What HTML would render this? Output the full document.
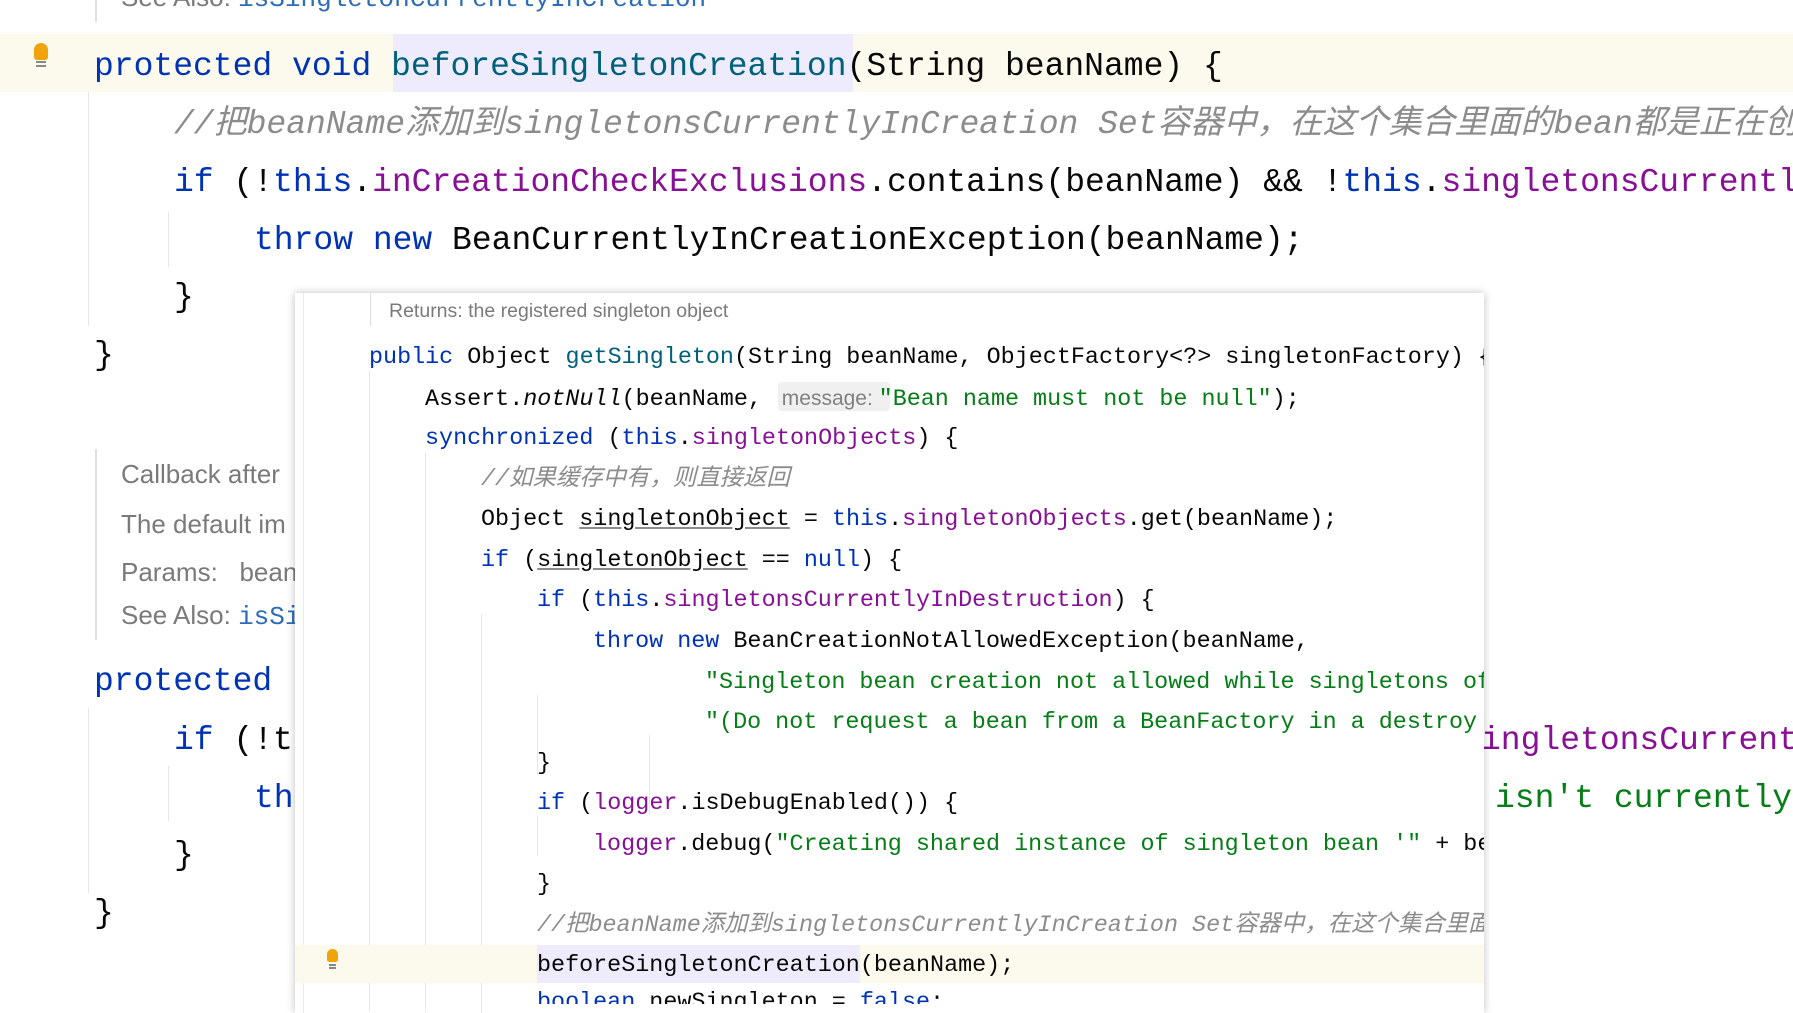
<!DOCTYPE html>
<html><head><meta charset="utf-8"><style>
body{margin:0;width:1793px;height:1004px;overflow:hidden;background:#fff;position:relative;font-family:"Liberation Mono","Noto Sans CJK SC",monospace}
.l{position:absolute;white-space:pre;font-size:33px;line-height:40px;color:#080808}
.p{position:absolute;white-space:pre;font-size:23.4px;line-height:30px;color:#080808}
.k{color:#0033b3}.f{color:#871094}.s{color:#067d17}.m{color:#00627a}
.c{color:#8c8c8c;font-style:italic}
.d{position:absolute;white-space:pre;font-family:"Liberation Sans",sans-serif;font-size:26px;color:#7a7a7a}
.g{position:absolute;width:1px;background:#e6e6e6}
.u{text-decoration:underline;text-decoration-color:#8c8c8c}
.bulb{position:absolute;width:14px;height:17px;background:#f0a30a;border-radius:7px 7px 3px 3px}
</style></head><body>
<div class="d" style="left:121px;top:-18px">See Also: <span style="font-family:'Liberation Mono',monospace;color:#2e6db5">isSingletonCurrentlyInCreation</span></div>
<div class="g" style="left:95px;top:0;height:22px;width:2px;background:#e0e0e0"></div>

<div style="position:absolute;left:0;top:34px;width:1793px;height:58px;background:#fcfaed"></div>
<div style="position:absolute;left:393px;top:34px;width:460px;height:58px;background:#edebfc"></div>
<div class="bulb" style="left:34px;top:43px"></div>
<div style="position:absolute;left:36px;top:61px;width:10px;height:2px;background:#888;box-shadow:0 4px 0 #888"></div>

<div class="g" style="left:88px;top:92px;height:234px"></div>
<div class="g" style="left:168px;top:212px;height:55px"></div>
<div class="g" style="left:88px;top:708px;height:185px"></div>
<div class="g" style="left:168px;top:766px;height:55px"></div>

<div class="l" style="left:94px;top:47px"><span class="k">protected void </span><span class="m">beforeSingletonCreation</span>(String beanName) {</div>
<div class="l c" style="left:174px;top:105px">//把beanName添加到singletonsCurrentlyInCreation Set容器中，在这个集合里面的bean都是正在创建的</div>
<div class="l" style="left:174px;top:163px"><span class="k">if </span>(!<span class="k">this</span>.<span class="f">inCreationCheckExclusions</span>.contains(beanName) &amp;&amp; !<span class="k">this</span>.<span class="f">singletonsCurrentlyInCreation</span>.add(beanName)) {</div>
<div class="l" style="left:254px;top:221px"><span class="k">throw new </span>BeanCurrentlyInCreationException(beanName);</div>
<div class="l" style="left:174px;top:278px">}</div>
<div class="l" style="left:94px;top:336px">}</div>

<div class="g" style="left:95px;top:449px;height:191px;width:2px;background:#e0e0e0"></div>
<div class="d" style="left:121px;top:459px">Callback after</div>
<div class="d" style="left:121px;top:509px">The default im</div>
<div class="d" style="left:121px;top:557px">Params:&nbsp;&nbsp;&nbsp;bean</div>
<div class="d" style="left:121px;top:600px">See Also: <span style="font-family:'Liberation Mono',monospace;color:#2e6db5">isSi</span></div>

<div class="l" style="left:94px;top:662px"><span class="k">protected </span></div>
<div class="l" style="left:174px;top:721px"><span class="k">if </span>(!t</div>
<div class="l" style="left:254px;top:779px"><span class="k">th</span></div>
<div class="l" style="left:174px;top:836px">}</div>
<div class="l" style="left:94px;top:894px">}</div>
<div class="l f" style="left:1481px;top:721px">ingletonsCurrent</div>
<div class="l s" style="left:1495px;top:779px">isn't currently</div>

<div style="position:absolute;left:295px;top:293px;width:1189px;height:720px;background:#fff;box-shadow:0 0 8px rgba(0,0,0,.25);overflow:hidden">
  <div style="position:absolute;left:75px;top:0;width:1px;height:33px;background:#ddd"></div>
  <div style="position:absolute;left:94px;top:7px;font-family:'Liberation Sans',sans-serif;font-size:19.5px;color:#7a7a7a;white-space:pre">Returns: the registered singleton object</div>
  <div style="position:absolute;left:8px;top:0;width:1px;height:720px;background:#ececec"></div>
  <div class="g" style="left:74px;top:78px;height:640px"></div>
  <div class="g" style="left:130px;top:159px;height:560px"></div>
  <div class="g" style="left:186px;top:321px;height:400px"></div>
  <div class="g" style="left:242px;top:402px;height:80px"></div>
  <div class="g" style="left:242px;top:523px;height:40px"></div>
  <div class="g" style="left:354px;top:442px;height:80px"></div>
  <div style="position:absolute;left:0;top:652px;width:1189px;height:38px;background:#fcfaed"></div>
  <div style="position:absolute;left:242px;top:652px;width:323px;height:38px;background:#edebfc"></div>
  <div class="bulb" style="left:32px;top:656px;width:11px;height:13px"></div>
  <div style="position:absolute;left:34px;top:671px;width:7px;height:2px;background:#888;box-shadow:0 3px 0 #888"></div>
  <div style="position:absolute;left:483px;top:89px;width:112px;height:29px;background:#f0f0f0;border-radius:4px"></div>
</div>
<div style="position:absolute;left:295px;top:293px;width:1189px;height:711px;overflow:hidden">
<div class="p" style="left:74px;top:50px"><span class="k">public </span>Object <span class="m">getSingleton</span>(String beanName, ObjectFactory&lt;?&gt; singletonFactory) {</div>
<div class="p" style="left:130px;top:91px">Assert.<i>notNull</i>(beanName, <span style="font-family:'Liberation Sans',sans-serif;color:#808080;font-size:21px"> message: </span><span class="s">"Bean name must not be null"</span>);</div>
<div class="p" style="left:130px;top:131px"><span class="k">synchronized </span>(<span class="k">this</span>.<span class="f">singletonObjects</span>) {</div>
<div class="p c" style="left:186px;top:172px">//如果缓存中有，则直接返回</div>
<div class="p" style="left:186px;top:212px">Object <span class="u">singletonObject</span> = <span class="k">this</span>.<span class="f">singletonObjects</span>.get(beanName);</div>
<div class="p" style="left:186px;top:253px"><span class="k">if </span>(<span class="u">singletonObject</span> == <span class="k">null</span>) {</div>
<div class="p" style="left:242px;top:293px"><span class="k">if </span>(<span class="k">this</span>.<span class="f">singletonsCurrentlyInDestruction</span>) {</div>
<div class="p" style="left:298px;top:334px"><span class="k">throw new </span>BeanCreationNotAllowedException(beanName,</div>
<div class="p s" style="left:410px;top:375px">"Singleton bean creation not allowed while singletons of this factory are in destruction " +</div>
<div class="p s" style="left:410px;top:415px">"(Do not request a bean from a BeanFactory in a destroy method implementation!)");</div>
<div class="p" style="left:242px;top:456px">}</div>
<div class="p" style="left:242px;top:496px"><span class="k">if </span>(<span class="f">logger</span>.isDebugEnabled()) {</div>
<div class="p" style="left:298px;top:537px"><span class="f">logger</span>.debug(<span class="s">"Creating shared instance of singleton bean '"</span> + beanName + <span class="s">"'"</span>);</div>
<div class="p" style="left:242px;top:577px">}</div>
<div class="p c" style="left:242px;top:618px">//把beanName添加到singletonsCurrentlyInCreation Set容器中，在这个集合里面的bean都是正在创建的</div>
<div class="p" style="left:242px;top:658px">beforeSingletonCreation(beanName);</div>
<div class="p" style="left:242px;top:695px"><span class="k">boolean </span>newSingleton = <span class="k">false</span>;</div>
</div>
</body></html>
